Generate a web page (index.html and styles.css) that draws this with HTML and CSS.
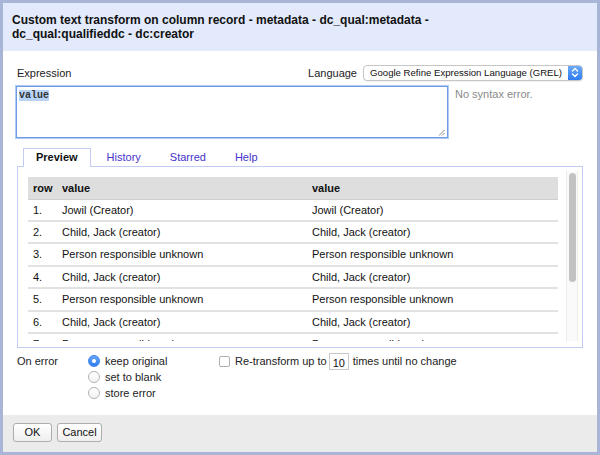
FILE: index.html
```html
<!DOCTYPE html>
<html>
<head>
<meta charset="utf-8">
<link rel="stylesheet" href="styles.css">
</head>
<body>
<div class="dialog">
  <div class="title"><div class="title-text">Custom text transform on column record - metadata - dc_qual:metadata - dc_qual:qualifieddc - dc:creator</div></div>
  <div class="body">
    <div class="expr-head">
      <span>Expression</span>
      <div class="lang">
        <span>Language</span>
        <div class="select">
          <span class="select-text">Google Refine Expression Language (GREL)</span>
          <span class="select-btn">
            <svg width="8" height="11" viewBox="0 0 8 11"><path d="M1.5 4 L4 1.5 L6.5 4 M1.5 7 L4 9.5 L6.5 7" fill="none" stroke="#fff" stroke-width="1.3" stroke-linecap="round" stroke-linejoin="round"/></svg>
          </span>
        </div>
      </div>
    </div>
    <div class="expr-row">
      <div class="textarea">
        <span class="code"><span class="sel">value</span></span>
        <svg class="grip" width="7" height="7" viewBox="0 0 7 7"><path d="M1 6.5 L6.5 1 M4 6.5 L6.5 4" stroke="#888" stroke-width="1"/></svg>
      </div>
      <div class="status">No syntax error.</div>
    </div>
    <div class="tabs">
      <span class="tab active">Preview</span>
      <span class="tab">History</span>
      <span class="tab">Starred</span>
      <span class="tab">Help</span>
    </div>
    <div class="panel">
      <div class="scroller">
        <div class="clip">
          <table class="grid">
            <thead>
              <tr><th class="c1">row</th><th class="c2">value</th><th class="c3">value</th></tr>
            </thead>
            <tbody>
              <tr><td>1.</td><td>Jowil (Creator)</td><td>Jowil (Creator)</td></tr>
              <tr><td>2.</td><td>Child, Jack (creator)</td><td>Child, Jack (creator)</td></tr>
              <tr><td>3.</td><td>Person responsible unknown</td><td>Person responsible unknown</td></tr>
              <tr><td>4.</td><td>Child, Jack (creator)</td><td>Child, Jack (creator)</td></tr>
              <tr><td>5.</td><td>Person responsible unknown</td><td>Person responsible unknown</td></tr>
              <tr><td>6.</td><td>Child, Jack (creator)</td><td>Child, Jack (creator)</td></tr>
              <tr><td>7.</td><td>Person responsible unknown</td><td>Person responsible unknown</td></tr>
            </tbody>
          </table>
        </div>
        <div class="scrollbar"><div class="thumb"></div></div>
      </div>
    </div>
    <div class="options">
      <div class="on-error">On error</div>
      <div class="radios">
        <label class="opt"><span class="radio checked"></span>keep original</label>
        <label class="opt"><span class="radio"></span>set to blank</label>
        <label class="opt"><span class="radio"></span>store error</label>
      </div>
      <div class="retransform">
        <span class="checkbox"></span>
        <span>Re-transform up to</span>
        <span class="num">10</span>
        <span>times until no change</span>
      </div>
    </div>
  </div>
  <div class="footer">
    <button class="btn ok">OK</button>
    <button class="btn cancel">Cancel</button>
  </div>
</div>
</body>
</html>
```

FILE: styles.css
```css
html, body {
  margin: 0;
  padding: 0;
  background: #fff;
}

.dialog {
  width: 600px;
  height: 455px;
  box-sizing: border-box;
  border: 3px solid #a8b5d7;
  display: flex;
  flex-direction: column;
  font-family: "Liberation Sans", Arial, sans-serif;
  font-size: 11px;
  color: #222;
  background: #fff;
}

.title {
  background: #e2eafb;
  padding: 10px 9px;
  height: 48px;
  box-sizing: border-box;
  font-weight: bold;
  font-size: 12px;
  line-height: 14px;
  color: #111;
}

.title-text {
  max-width: 440px;
}

.body {
  flex: 1;
  padding: 13px 14px 0 14px;
  display: flex;
  flex-direction: column;
}

.expr-head {
  display: flex;
  justify-content: space-between;
  align-items: center;
  height: 17px;
}

.lang {
  display: flex;
  align-items: center;
  gap: 6px;
}

.select {
  width: 220px;
  height: 16px;
  box-sizing: border-box;
  border: 1px solid #c6c6c6;
  border-radius: 4px;
  background: #fff;
  display: flex;
  box-shadow: 0 1px 1px rgba(0,0,0,0.06);
  overflow: hidden;
}

.select-text {
  flex: 1;
  padding-left: 6px;
  line-height: 14px;
  font-size: 9.6px;
  color: #111;
  white-space: nowrap;
  overflow: hidden;
}

.select-btn {
  width: 14px;
  background: linear-gradient(#6caaf8, #2f7cf0);
  display: flex;
  align-items: center;
  justify-content: center;
}

.expr-row {
  display: flex;
  margin-top: 5px;
}

.textarea {
  width: 432px;
  height: 52px;
  box-sizing: border-box;
  margin-left: -1px;
  border: 1px solid #6e9be8;
  box-shadow: 0 0 0 1px #b3cbf5;
  padding: 3px 2px 1px 2px;
  display: flex;
  flex-direction: column;
}

.code {
  font-family: "Liberation Mono", "DejaVu Sans Mono", monospace;
  font-size: 10px;
  line-height: 11px;
  font-weight: bold;
  color: #333;
}

.sel {
  background: #b8d3f8;
}

.grip {
  margin-top: auto;
  align-self: flex-end;
}

.status {
  margin-left: 7px;
  padding-top: 2px;
  color: #8a8a8a;
  font-size: 11px;
  line-height: 13px;
}

.tabs {
  display: flex;
  margin-top: 10px;
  margin-bottom: -1px;
  padding-left: 6px;
  height: 19px;
}

.tab {
  box-sizing: border-box;
  height: 19px;
  padding: 0 12px;
  margin-right: 3px;
  line-height: 16px;
  border: 1px solid transparent;
  border-bottom: 0;
  color: #4433cc;
}

.tab.active {
  position: relative;
  z-index: 1;
  border-color: #c3cdf3;
  background: #fff;
  color: #111;
  font-weight: bold;
}

.panel {
  height: 182px;
  box-sizing: border-box;
  border: 1px solid #c3cdf3;
  padding: 4px 4px 5px 10px;
}

.scroller {
  display: flex;
  height: 170px;
}

.clip {
  width: 530px;
  flex: none;
  overflow: hidden;
  padding-top: 6px;
}

.grid {
  width: 530px;
  border-collapse: collapse;
  table-layout: fixed;
}

.grid th {
  background: #dedede;
  text-align: left;
  font-weight: bold;
  height: 22px;
  padding: 0 5px;
  border-bottom: 1px solid #cfcfcf;
  box-sizing: border-box;
  color: #111;
}

.grid td {
  padding: 0 5px;
  line-height: 20.4px;
  border-bottom: 2px solid #e2e2e2;
  white-space: nowrap;
  color: #111;
}

.c1 { width: 29px; }
.c2 { width: 250px; }
.c3 { width: 251px; }

.scrollbar {
  margin-left: 8px;
  width: 12px;
  box-sizing: border-box;
  border-left: 1px solid #ececec;
  border-right: 1px solid #ececec;
  background: #fafafa;
  padding-top: 2px;
}

.thumb {
  width: 7px;
  height: 109px;
  margin: 0 auto;
  border-radius: 4px;
  background: #c2c2c2;
}

.options {
  display: flex;
  margin-top: 5px;
}

.on-error {
  width: 71px;
  line-height: 16px;
}

.radios {
  width: 131px;
  display: flex;
  flex-direction: column;
}

.opt {
  display: flex;
  align-items: center;
  height: 16px;
}

.radio {
  width: 12px;
  height: 12px;
  box-sizing: border-box;
  border-radius: 50%;
  border: 1px solid #b3b3b3;
  background: linear-gradient(#fff, #f3f3f3);
  margin-right: 5px;
  display: flex;
  align-items: center;
  justify-content: center;
}

.radio.checked {
  border-color: #3a84ef;
  background: linear-gradient(#6aa8f7, #2e7bef);
}

.radio.checked::after {
  content: "";
  width: 4px;
  height: 4px;
  border-radius: 50%;
  background: #fff;
}

.retransform {
  display: flex;
  align-items: center;
  height: 16px;
}

.checkbox {
  width: 11px;
  height: 11px;
  box-sizing: border-box;
  border: 1px solid #b0b0b0;
  border-radius: 2px;
  background: #fff;
  margin-right: 5px;
}

.num {
  width: 20px;
  height: 17px;
  box-sizing: border-box;
  border: 1px solid #c9c9c9;
  margin: 0 4px 0 2px;
  padding-left: 3px;
  line-height: 16px;
  padding-top: 1px;
  color: #111;
}

.footer {
  height: 37px;
  box-sizing: border-box;
  background: #ebebeb;
  padding: 8px 10px;
  display: flex;
  gap: 5px;
  align-items: flex-start;
}

.btn {
  height: 19px;
  box-sizing: border-box;
  border: 1px solid #adadad;
  border-radius: 3px;
  background: linear-gradient(#ffffff, #efefef);
  font-family: "Liberation Sans", Arial, sans-serif;
  font-size: 11px;
  color: #111;
  padding: 0;
  line-height: 17px;
}

.ok { width: 39px; }
.cancel { width: 45px; }
```
